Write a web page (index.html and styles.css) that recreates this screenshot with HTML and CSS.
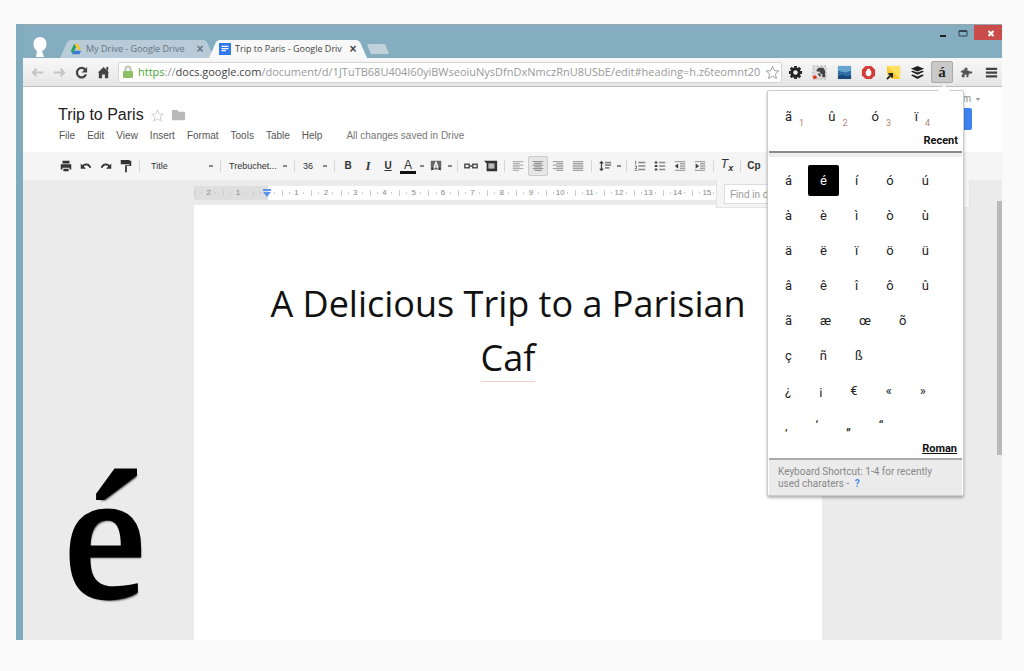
FILE: index.html
```html
<!DOCTYPE html>
<html lang="en">
<head>
<meta charset="utf-8">
<title>Trip to Paris - Google Drive</title>
<link rel="stylesheet" href="styles.css">
</head>
<body>
<main class="window">
  <header class="titlebar">
    <svg class="profile" viewBox="0 0 16 22" aria-hidden="true"><path d="M8 1C4 1 1.500 4 1.500 8c0 4 2 6 3.500 7l-1 6h8l-2-6c3-1 4.500-4 4.500-7 0-4-2.500-7-6.500-7z" fill="#fff"/></svg>
    <div class="tab">
      <svg class="fav" viewBox="0 0 14 14"><path d="M5 1h4l4 7H9z" fill="#f6c531"/><path d="M5 1l2 4-4 8-2-4z" fill="#21a365"/><path d="M5 9h8l-2 4H3z" fill="#3b79d8"/></svg>
      <span class="tab-name">My Drive - Google Drive</span>
      <button class="tab-close" aria-label="Close My Drive">×</button>
    </div>
    <div class="tab tab-active">
      <svg class="fav" viewBox="0 0 14 14"><path d="M0 0h14v14H0z" fill="#3079ed"/><path d="M3 4h8M3 6.500h8M3 9h5" stroke="#fff" stroke-width="1.500"/></svg>
      <span class="tab-name">Trip to Paris - Google Driv</span>
      <button class="tab-close" aria-label="Close Trip to Paris">×</button>
    </div>
    <button class="new-tab" aria-label="New tab"></button>
    <div class="win-controls">
      <button aria-label="Minimize"><svg viewBox="0 0 12 12"><path d="M3 9h6" stroke="#222" stroke-width="2"/></svg></button>
      <button aria-label="Maximize"><svg viewBox="0 0 12 12"><path d="M2 4h8v5H2z" fill="none" stroke="#345" /><path d="M2 4h8" stroke="#345" stroke-width="2"/></svg></button>
      <button class="win-close" aria-label="Close"><svg viewBox="0 0 12 12"><path d="M3.500 4l5 5M8.500 4l-5 5" stroke="#fff" stroke-width="2"/></svg></button>
    </div>
  </header>

  <nav class="browser-bar">
    <button class="nav" aria-label="Back"><svg viewBox="0 0 16 16"><path d="M14 8H3M7 4L3 8l4 4" fill="none" stroke="#c4c4c4" stroke-width="2"/></svg></button>
    <button class="nav" aria-label="Forward"><svg viewBox="0 0 16 16"><path d="M2 8h11M9 4l4 4-4 4" fill="none" stroke="#c4c4c4" stroke-width="2"/></svg></button>
    <button class="nav" aria-label="Reload"><svg viewBox="0 0 16 16"><path d="M12 5a5 5 0 1 0 .8 5" fill="none" stroke="#444" stroke-width="2.400"/><path d="M14 2v6H8z" fill="#444"/></svg></button>
    <button class="nav" aria-label="Home"><svg viewBox="0 0 16 16"><path d="M8 2l6 6h-1v6H9.500v-4h-3v4H3V8H2z" fill="#444"/><path d="M11 2h2v4h-2z" fill="#444"/></svg></button>
    <div class="omnibox">
      <svg class="lock" viewBox="0 0 12 14"><path d="M3.500 7V4a2.500 2.500 0 0 1 5 0v3" fill="none" stroke="#bcc5b4" stroke-width="2"/><rect x="1" y="6" width="10" height="7" rx="1" fill="#8cc063"/></svg>
      <div class="url" role="textbox" contenteditable="true" aria-label="Address" spellcheck="false"><span class="scheme">https</span>://<span class="host">docs.google.com</span>/document/d/1JTuTB68U404I60yiBWseoiuNysDfnDxNmczRnU8USbE/edit#heading=h.z6teomnt20</div>
      <button class="star" aria-label="Bookmark"><svg viewBox="0 0 16 16"><path d="M8 1.500l2 4.500 4.700.4-3.600 3.200 1.100 4.800L8 11.900l-4.200 2.500 1.100-4.800L1.300 6.400 6 6z" fill="#fff" stroke="#999"/></svg></button>
    </div>
    <div class="extensions">
      <button aria-label="Settings"><svg viewBox="0 0 16 16"><circle cx="8" cy="8" r="4" fill="none" stroke="#222" stroke-width="3"/><path d="M8 1v2M8 13v2M1 8h2M13 8h2M3 3l1.500 1.500M11.500 11.500L13 13M3 13l1.500-1.500M11.500 4.500L13 3" stroke="#222" stroke-width="3"/></svg></button>
      <button aria-label="Evernote clipper"><svg viewBox="0 0 16 16"><path d="M1 1h14v14H1z" fill="#ddd" stroke="#aaa" stroke-dasharray="2 2"/><path d="M5 5l2-2h5l2 3v7h-3v-3l-2-1-1-2H5z" fill="#444"/><path d="M7 9l2 3" stroke="#444" stroke-width="2"/><circle cx="3" cy="13" r="2" fill="#e33b20"/></svg></button>
      <button aria-label="Photo"><svg viewBox="0 0 16 16"><path d="M1 1h14v14H1z" fill="#2e6fa8"/><path d="M1 1h14v5L9 8 1 6z" fill="#69a4cf"/><path d="M1 12l5-2 4 2 5-1v4H1z" fill="#174a76"/></svg></button>
      <button aria-label="Blocker"><svg viewBox="0 0 16 16"><path d="M5 1h6l4 4v6l-4 4H5l-4-4V5z" fill="#d63a37"/><path d="M5 7l1-1 1-2h2l2 3v3l-2 2H7L5 10z" fill="#fff"/></svg></button>
      <button aria-label="Notes"><svg viewBox="0 0 16 16"><path d="M1 1h14v14H1z" fill="#fbc934"/><path d="M1 1l14 14V1z" fill="#fde05e"/><path d="M0 9h7v7H0z" fill="#fff" opacity=".5"/><path d="M1 15l5-5M2.500 9.500h4v4" fill="none" stroke="#222" stroke-width="2"/></svg></button>
      <button aria-label="Buffer"><svg viewBox="0 0 16 16"><path d="M8 1l7 3-7 3-7-3zM1 7l2-1 5 2 5-2 2 1-7 3.500zM1 11l2-1 5 2.200L13 10l2 1-7 4z" fill="#222"/></svg></button>
      <button class="ext-active" aria-label="Special characters">á</button>
      <button aria-label="Extension"><svg viewBox="0 0 16 16"><path d="M4 5h2V3h3v3h2v1h3v2h-3v1h-1v3H8v-3H6v3H3v-3h1V8H2V6h2z" fill="#555"/></svg></button>
      <button aria-label="Menu"><svg viewBox="0 0 16 16"><path d="M2 4h12M2 8h12M2 12h12" stroke="#444" stroke-width="2.400"/></svg></button>
    </div>
  </nav>

  <section class="doc-head">
    <div class="doc-info">
      <div class="doc-name">
        <h1>Trip to Paris</h1>
        <svg viewBox="0 0 16 16"><path d="M8 2l1.800 4.300 4.500.3-3.500 3 1.200 4.400L8 11.600 4 14l1.200-4.400-3.500-3 4.500-.3z" fill="none" stroke="#ccc"/></svg>
        <svg viewBox="0 0 16 16"><path d="M1 2h6l1 2h7v9H1z" fill="#b9b9b9"/></svg>
      </div>
      <div class="menus">
        <button>File</button><button>Edit</button><button>View</button><button>Insert</button><button>Format</button><button>Tools</button><button>Table</button><button>Help</button>
        <span class="saved">All changes saved in Drive</span>
      </div>
    </div>
    <div class="account">
      <button class="email">com <svg viewBox="0 0 8 6"><path d="M1 1h6L4 5z" fill="#999"/></svg></button>
      <button class="share">Share</button>
    </div>
  </section>

  <section class="format-bar">
    <button aria-label="Print"><svg viewBox="0 0 16 16"><path d="M4 2h8v3H4zM2 6h12v6h-2v-2H4v2H2zM5 11h6v3H5z" fill="#333"/></svg></button>
    <button aria-label="Undo"><svg viewBox="0 0 16 16"><path d="M4 9c2-4 7-4 9 1" fill="none" stroke="#333" stroke-width="2.200"/><path d="M2 5v6h6z" fill="#333"/></svg></button>
    <button aria-label="Redo"><svg viewBox="0 0 16 16"><path d="M12 9C10 5 5 5 3 10" fill="none" stroke="#333" stroke-width="2.200"/><path d="M14 5v6H8z" fill="#333"/></svg></button>
    <button aria-label="Paint format"><svg viewBox="0 0 16 16"><path d="M2 1h10v5H2zM12 2h2v6H9v7H7V7h5z" fill="#333"/></svg></button>
    <i class="sep"></i>
    <select class="sel-style" aria-label="Style"><option>Title</option></select>
    <i class="sep"></i>
    <select class="sel-font" aria-label="Font"><option>Trebuchet...</option></select>
    <i class="sep"></i>
    <select class="sel-size" aria-label="Size"><option>36</option></select>
    <i class="sep"></i>
    <button aria-label="Bold"><b>B</b></button>
    <button aria-label="Italic"><b class="ital">I</b></button>
    <button aria-label="Underline"><b class="under">U</b></button>
    <button aria-label="Text color"><span class="color-a">A</span></button>
    <button class="drop" aria-label="Text color options"></button>
    <button aria-label="Highlight"><svg viewBox="0 0 16 16"><path d="M2 2h12v10H2z" fill="#666"/><path d="M5 11l3-7 3 7M6 9h4" fill="none" stroke="#fff" stroke-width="1.500"/><path d="M2 13l3-5v4zM14 13l-3-5v4z" fill="#222"/></svg></button>
    <button class="drop" aria-label="Highlight options"></button>
    <i class="sep"></i>
    <button aria-label="Link"><svg viewBox="0 0 16 16"><path d="M6 6H1v4h5zM10 6h5v4h-5zM5 8h6" fill="none" stroke="#555" stroke-width="1.800"/></svg></button>
    <button aria-label="Comment"><svg viewBox="0 0 16 16"><path d="M0 2h15v12H3V5z" fill="#333"/><path d="M5 5h7v6H5z" fill="#bbb"/></svg></button>
    <i class="sep"></i>
    <button aria-label="Align left"><svg viewBox="0 0 16 16"><path d="M2 3h12M2 5h8M2 7h12M2 9h8M2 11h12M2 13h7" stroke="#999"/></svg></button>
    <button class="pressed" aria-label="Align center"><svg viewBox="0 0 16 16"><path d="M2 3h12M4 5h8M2 7h12M4 9h8M2 11h12M4 13h8" stroke="#777"/></svg></button>
    <button aria-label="Align right"><svg viewBox="0 0 16 16"><path d="M2 3h12M6 5h8M2 7h12M6 9h8M2 11h12M6 13h8" stroke="#888"/></svg></button>
    <button aria-label="Justify"><svg viewBox="0 0 16 16"><path d="M2 3h12M2 5h12M2 7h12M2 9h12M2 11h12M2 13h12" stroke="#888"/></svg></button>
    <i class="sep"></i>
    <button aria-label="Line spacing"><svg viewBox="0 0 16 16"><path d="M4 3v10M2 5l2-2 2 2M2 11l2 2 2-2" fill="none" stroke="#444" stroke-width="1.500"/><path d="M8 4h7M8 7h7M8 10h5" stroke="#888" stroke-width="2"/></svg></button>
    <button class="drop" aria-label="Line spacing options"></button>
    <i class="sep"></i>
    <button aria-label="Numbered list"><svg viewBox="0 0 16 16"><path d="M3 2v4M2 8h2v3H2M2 13h3" fill="none" stroke="#666"/><path d="M6 4h8M6 8h8M6 12h8" stroke="#888" stroke-width="1.500"/></svg></button>
    <button aria-label="Bulleted list"><svg viewBox="0 0 16 16"><path d="M2 4h3M2 8h3M2 12h3" stroke="#444" stroke-width="2.500"/><path d="M7 4h7M7 8h7M7 12h7" stroke="#888" stroke-width="1.500"/></svg></button>
    <button aria-label="Decrease indent"><svg viewBox="0 0 16 16"><path d="M2 3h12M8 5h6M8 7h6M8 9h6M8 11h6M2 13h12" stroke="#888"/><path d="M6 5v6L2 8z" fill="#444"/></svg></button>
    <button aria-label="Increase indent"><svg viewBox="0 0 16 16"><path d="M2 3h12M8 5h6M8 7h6M8 9h6M8 11h6M2 13h12" stroke="#888"/><path d="M3 5v6l4-3z" fill="#444"/></svg></button>
    <i class="sep"></i>
    <button aria-label="Clear formatting"><span class="clear-t">T<sub>x</sub></span></button>
    <i class="sep"></i>
    <button aria-label="Cp"><b>Cp</b></button>
  </section>

  <section class="canvas">
    <div class="ruler">
      <span>2</span><span>1</span><span><svg viewBox="0 0 10 10"><path d="M1 1h8v2H1zM1 4h8L5 9z" fill="#5b93ee"/></svg></span><span>1</span><span>2</span><span>3</span><span>4</span><span>5</span><span>6</span><span>7</span><span>8</span><span>9</span><span>10</span><span>11</span><span>12</span><span>13</span><span>14</span><span>15</span>
    </div>
    <div class="big-letter">é</div>
    <article class="sheet">
      <h2>A Delicious Trip to a Parisian <span class="misspelt">Caf</span></h2>
    </article>
    <div class="find"><input type="text" placeholder="Find in document" aria-label="Find in document"></div>
    <div class="scroll-thumb"></div>
  </section>

  <aside class="popup">
    <div class="recent">
      <div class="recent-row">
        <button>ã<sub>1</sub></button><button>û<sub>2</sub></button><button>ó<sub>3</sub></button><button>ï<sub>4</sub></button>
      </div>
      <h3>Recent</h3>
    </div>
    <div class="letters">
      <div class="row"><button>á</button><button class="chosen">é</button><button>í</button><button>ó</button><button>ú</button></div>
      <div class="row"><button>à</button><button>è</button><button>ì</button><button>ò</button><button>ù</button></div>
      <div class="row"><button>ä</button><button>ë</button><button>ï</button><button>ö</button><button>ü</button></div>
      <div class="row"><button>â</button><button>ê</button><button>î</button><button>ô</button><button>û</button></div>
      <div class="row"><button>ã</button><button>æ</button><button>œ</button><button>õ</button></div>
      <div class="row"><button>ç</button><button>ñ</button><button>ß</button></div>
      <div class="row"><button>¿</button><button>¡</button><button>€</button><button>«</button><button>»</button></div>
      <div class="row"><button>‚</button><button>‘</button><button>„</button><button>“</button></div>
      <h3><a href="#roman">Roman</a></h3>
    </div>
    <p class="hint">Keyboard Shortcut: 1-4 for recently used charaters - <a href="#help">?</a></p>
  </aside>
</main>
</body>
</html>
```
FILE: styles.css
```css
* { box-sizing: border-box; }
body {
  margin: 0;
  min-height: 100vh;
  display: flex;
  padding: 24px 22px 31px 16px;
  background: #fafafa;
  font: 10px/12px "Liberation Sans", Arial, sans-serif;
  color: #555;
}
button, select, input { font: inherit; color: inherit; border: 0; margin: 0; padding: 0; background: none; }
button { display: flex; align-items: center; justify-content: center; }
h1, h2, h3, p { margin: 0; font-weight: normal; }
svg { flex: none; display: block; }

.window {
  position: relative;
  flex: 1;
  min-width: 0;
  display: flex;
  flex-direction: column;
  border-left: 7px solid #80abbd;
  background: #fff;
}

.titlebar { display: flex; align-items: flex-end; height: 34px; background: #84adc0; border-top: 1px solid #9aa6ad; }
.profile { width: 16px; height: 22px; margin: 0 12px 0 9px; }
.tab {
  display: flex;
  align-items: center;
  width: 154px;
  height: 18px;
  padding: 0 8px 0 10px;
  gap: 4px;
  background: #b9cbd8;
  clip-path: polygon(0 100%, 7px 2px, 10px 0, calc(100% - 10px) 0, calc(100% - 7px) 2px, 100% 100%);
  font: 9px/14px "Open Sans", sans-serif;
  color: #667480;
}
.tab-active { width: 158px; margin-left: -5px; background: #f8f8f8; color: #444; }
.fav { width: 12px; height: 12px; }
.tab-name { flex: 1; white-space: nowrap; overflow: hidden; }
.tab-close { width: 12px; height: 12px; font: bold 12px/12px "Liberation Sans", sans-serif; }
.new-tab { width: 22px; height: 10px; margin-bottom: 4px; background: #c0d1dc; clip-path: polygon(0 0, 18px 0, 100% 100%, 4px 100%); }
.win-controls { display: flex; align-self: flex-start; margin-left: auto; }
.win-controls button { width: 20px; height: 15px; }
.win-controls svg { width: 12px; height: 12px; }
.win-controls .win-close { width: 28px; margin-left: 1px; padding-left: 6px; background: #cb4d4b; }

.browser-bar { display: flex; align-items: center; height: 29px; padding-left: 3px; background: linear-gradient(#f8f8f8, #e6e6e6); border-bottom: 1px solid #bdbdbd; }
.nav { width: 22px; height: 22px; }
.nav svg { width: 15px; height: 15px; }
.omnibox { flex: 1; min-width: 0; display: flex; align-items: center; height: 21px; margin-left: 4px; padding: 0 1px 0 3px; gap: 4px; background: #fff; border: 1px solid #d4d4d4; border-radius: 2px; }
.lock { width: 12px; height: 14px; }
.url { flex: 1; min-width: 0; overflow: hidden; white-space: nowrap; font: 11px/18px "Open Sans", sans-serif; color: #999; }
.scheme { color: #4aa836; }
.host { color: #444; }
.star { margin-left: -4px; }
.star svg { width: 15px; height: 15px; }
.extensions { display: grid; grid-template-columns: repeat(9, 1fr); justify-items: end; width: 220px; }
.extensions button { width: 22px; height: 22px; }
.extensions svg { width: 15px; height: 15px; }
.extensions .ext-active { background: #c9c9c9; border: 1px solid #aaa; border-radius: 2px; font: bold 15px/18px "Liberation Serif", serif; color: #222; }

.doc-head { display: flex; justify-content: space-between; height: 65px; padding: 18px 21px 0 35px; }
.doc-name { display: flex; align-items: center; gap: 6px; height: 20px; }
.doc-name h1 { font-size: 16px; line-height: 20px; color: #222; }
.doc-name svg { width: 15px; height: 15px; }
.menus { display: flex; gap: 12px; padding: 5px 1px; }
.saved { margin-left: 12px; color: #777; }
.account { display: flex; flex-direction: column; align-items: flex-end; margin-top: -12px; }
.email { gap: 4px; height: 12px; color: #888; }
.email svg { width: 6px; height: 5px; }
.share { width: 52px; height: 22px; margin: 3px 9px 0 0; border-radius: 2px; background: #3d83ee; color: #fff; }

.format-bar { display: flex; align-items: center; height: 28px; padding-left: 33px; background: #f5f5f5; color: #333; }
.format-bar button { width: 20px; height: 20px; }
.format-bar svg { width: 14px; height: 14px; }
.sep { width: 1px; height: 12px; margin: 0 3px; background: #d6d6d6; }
.format-bar select, .format-bar .drop { appearance: none; background: linear-gradient(#888, #888) right 4px center / 4px 2px no-repeat; }
.format-bar select { height: 20px; padding-left: 5px; font: 9px/20px "Liberation Sans", sans-serif; }
.format-bar .sel-style { width: 74px; padding-left: 8px; }
.sel-font { width: 67px; }
.sel-size { width: 33px; }
.format-bar .drop { width: 8px; background-position: center; }
.ital { font-family: "Liberation Serif", serif; font-style: italic; font-size: 12px; }
.under { text-decoration: underline; }
.color-a { padding: 0 4px; font-size: 12px; line-height: 12px; border-bottom: 3px solid #111; }
.format-bar .pressed { background: #e6e6e6; border: 1px solid #ccc; border-radius: 2px; }
.clear-t { font-style: italic; font-size: 12px; }
.clear-t sub { font-size: 9px; font-weight: bold; }

.canvas { position: relative; flex: 1; display: grid; grid-template-columns: 171fr 628fr 180fr; grid-template-rows: 25px 1fr; background: #ebebeb; }
.ruler { grid-column: 2; align-self: center; display: grid; grid-template-columns: repeat(18, 1fr); width: 84%; height: 14px; background: linear-gradient(90deg, #dedede 14%, #fff 14%); }
.ruler span { display: flex; align-items: center; justify-content: center; font-size: 8px; color: #888; background: linear-gradient(#ccc, #ccc) left center / 1px 6px no-repeat, linear-gradient(#ccc, #ccc) 25% center / 1px 2px no-repeat, linear-gradient(#ccc, #ccc) 75% center / 1px 2px no-repeat; }
.ruler svg { width: 10px; height: 10px; }
.big-letter { grid-column: 1; grid-row: 2; align-self: end; padding: 0 0 9px 42px; font: 180px/190px "Liberation Serif", serif; color: #000; -webkit-text-stroke: 5px #000; text-shadow: 2px 3px 2px #444; }
.sheet { grid-column: 2; grid-row: 2; padding: 72px 60px 0; background: #fff; }
.sheet h2 { font: 36px/54px "Open Sans", sans-serif; color: #111; text-align: center; }
.misspelt { display: inline-block; line-height: 46px; border-bottom: 1px solid #f3cdc8; }
.find { position: absolute; top: 0; right: 32px; width: 254px; height: 28px; padding: 4px 7px; background: #f5f5f5; border: 1px solid #e4e4e4; border-top: 0; }
.find input { width: 100%; height: 20px; padding: 0 5px; background: #fff; border: 1px solid #ddd; }
.find input::placeholder { color: #999; opacity: 1; }
.scroll-thumb { position: absolute; top: 21px; right: 0; width: 5px; height: 254px; background: #b9b9b9; }

.popup { position: absolute; top: 66px; right: 38px; width: 197px; background: #fff; border: 1px solid #ccc; border-radius: 2px; box-shadow: 0 2px 3px rgba(0, 0, 0, .3); color: #222; font-family: Roboto, sans-serif; }
.popup::before { content: ""; position: absolute; top: -6px; right: 13px; width: 12px; height: 6px; background: #fff; clip-path: polygon(50% 0, 100% 100%, 0 100%); }
.popup h3 { font-size: 11px; line-height: 14px; font-weight: bold; text-align: right; color: #111; }
.popup h3 a { color: inherit; }
.recent { margin: 0 1px; padding: 11px 4px 3px 16px; border-bottom: 2px solid #8c8c8c; }
.recent-row { display: flex; height: 32px; align-items: flex-start; }
.recent-row button { width: 44px; height: 30px; justify-content: flex-start; font-size: 13px; }
.recent-row sub { margin: 12px 0 0 7px; font-size: 9px; color: #b08474; }
.letters { display: flex; flex-direction: column; gap: 4px; margin: 0 1px; padding: 8px 5px 2px 4px; border-top: 4px solid #eee; border-bottom: 2px solid #aaa; }
.letters h3 { margin-top: -3px; }
.row { display: flex; gap: 4px; }
.row button { height: 31px; padding: 0 12px; font-size: 13px; border-radius: 2px; }
.row .chosen { background: #000; color: #fff; }
.hint { margin: 0 1px; padding: 6px 10px 5px 9px; background: #ebebeb; color: #888; }
.hint a { margin-left: 3px; color: #4a8af0; font-weight: bold; text-decoration: none; }
```
